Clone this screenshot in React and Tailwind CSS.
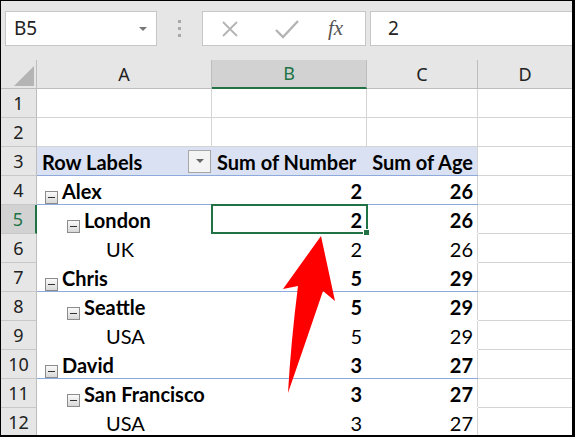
import React from "react";

const DATA_FONT = { fontFamily: "Lato, 'Liberation Sans', sans-serif" };
const UI_FONT = { fontFamily: "'Noto Sans', 'Open Sans', sans-serif" };

function Collapse() {
  return (
    <span className="inline-flex items-center justify-center w-[13px] h-[13px] border border-[#8c8c8c] bg-gradient-to-b from-[#fafafa] to-[#d8d8d8] mr-[4px] shrink-0">
      <span className="block w-[7px] h-[1px] bg-[#333]" />
    </span>
  );
}

const rows = [
  { n: 5, level: 1, label: "London", b: "2", c: "26", bold: true, sel: true },
  { n: 6, level: 2, label: "UK", b: "2", c: "26", bold: false },
  { n: 7, level: 0, label: "Chris", b: "5", c: "29", bold: true, line: true },
  { n: 8, level: 1, label: "Seattle", b: "5", c: "29", bold: true },
  { n: 9, level: 2, label: "USA", b: "5", c: "29", bold: false },
  { n: 10, level: 0, label: "David", b: "3", c: "27", bold: true, line: true },
  { n: 11, level: 1, label: "San Francisco", b: "3", c: "27", bold: true },
  { n: 12, level: 2, label: "USA", b: "3", c: "27", bold: false },
];

function RowHeader({ n, sel }) {
  return (
    <div
      className={
        "w-[36px] h-full flex items-center justify-center text-[18px] border-b border-[#c8c8c8] " +
        (sel
          ? "bg-[#d2d2d2] text-[#217346] border-r-2 border-r-[#217346]"
          : "bg-[#e6e6e6] text-[#222] border-r border-r-[#bdbdbd]")
      }
      style={UI_FONT}
    >
      {n}
    </div>
  );
}

function PivotRow({ r }) {
  const indent =
    r.level === 0 ? "pl-[8px]" : r.level === 1 ? "pl-[30px]" : "pl-[69px]";
  const weight = r.bold ? "font-bold" : "font-normal";
  const lineCls = r.line ? "border-b border-[#8ea9db]" : "border-b border-transparent";
  return (
    <div className="flex h-[29px]">
      <RowHeader n={r.n} sel={r.sel} />
      <div className={"flex " + lineCls} style={DATA_FONT}>
        <div className={"w-[175px] flex items-end pb-[3px] text-[20px] text-black " + indent + " " + weight}>
          {r.level < 2 && (
            <span className="self-center mt-[3px]">
              <Collapse />
            </span>
          )}
          <span className="leading-none">{r.label}</span>
        </div>
        <div className={"relative w-[155px] flex items-end justify-end pr-[5px] pb-[3px] text-[20px] text-black leading-none " + weight}>
          {r.b}
          {r.sel && (
            <div className="absolute -top-[1px] -left-[1px] -right-[1px] -bottom-[1px] border-2 border-[#217346]">
              <div className="absolute -right-[4px] -bottom-[4px] w-[7px] h-[7px] bg-[#217346] border border-white" />
            </div>
          )}
        </div>
        <div className={"w-[111px] flex items-end justify-end pr-[4px] pb-[3px] text-[20px] text-black leading-none border-r border-r-[#d4d4d4] " + weight}>
          {r.c}
        </div>
      </div>
      <div className="w-[94px] border-b border-[#d4d4d4] bg-white" />
    </div>
  );
}

export default function App() {
  return (
    <div className="relative w-[575px] h-[437px] overflow-hidden bg-[#e6e6e6] border-t border-l border-r-[3px] border-b-2 border-black">
      {/* Toolbar */}
      <div className="h-[59px] flex items-start pt-[10px] pl-[4px]" style={UI_FONT}>
        <div className="w-[152px] h-[35px] bg-white border border-[#c6c6c6] flex items-center justify-between pl-[8px] pr-[9px]">
          <span className="text-[19px] text-[#222]">B5</span>
          <span className="w-0 h-0 border-l-[4px] border-r-[4px] border-t-[4px] border-l-transparent border-r-transparent border-t-[#777]" />
        </div>
        <div className="w-[45px] h-[35px] flex flex-col items-center justify-center gap-[4px]">
          <span className="w-[3px] h-[3px] bg-[#a8a8a8]" />
          <span className="w-[3px] h-[3px] bg-[#a8a8a8]" />
          <span className="w-[3px] h-[3px] bg-[#a8a8a8]" />
        </div>
        <div className="w-[164px] h-[35px] bg-white border border-[#c6c6c6] flex items-center">
          <svg width="20" height="20" viewBox="0 0 20 20" className="ml-[17px]">
            <path d="M3 3 L17 17 M17 3 L3 17" stroke="#b4b4b4" strokeWidth="1.8" fill="none" />
          </svg>
          <svg width="26" height="22" viewBox="0 0 26 22" className="ml-[34px]">
            <path d="M2 12 L9 19 L24 3" stroke="#b4b4b4" strokeWidth="2.4" fill="none" />
          </svg>
          <span
            className="ml-[28px] text-[21px] italic text-[#555]"
            style={{ fontFamily: "'Liberation Serif', serif" }}
          >
            fx
          </span>
        </div>
        <div className="ml-[4px] flex-1 h-[35px] bg-white border border-[#c6c6c6] border-r-0 flex items-center pl-[17px]">
          <span className="text-[19px] text-[#222]">2</span>
        </div>
      </div>

      {/* Column headers */}
      <div className="flex h-[29px] text-[18px]" style={UI_FONT}>
        <div className="w-[36px] h-full bg-[#e6e6e6] border-r border-b border-[#bdbdbd] flex items-end justify-end p-[2px]">
          <svg width="20" height="20" viewBox="0 0 20 20">
            <path d="M20 0 L20 20 L0 20 Z" fill="#b4b4b4" />
          </svg>
        </div>
        <div className="w-[175px] h-full bg-[#e6e6e6] border-r border-b border-[#bdbdbd] flex items-center justify-center text-[#222]">
          A
        </div>
        <div className="w-[155px] h-full bg-[#d2d2d2] border-r border-r-[#bdbdbd] border-b-2 border-b-[#217346] flex items-center justify-center text-[#217346]">
          B
        </div>
        <div className="w-[111px] h-full bg-[#e6e6e6] border-r border-b border-[#bdbdbd] flex items-center justify-center text-[#222]">
          C
        </div>
        <div className="w-[94px] h-full bg-[#e6e6e6] border-b border-[#bdbdbd] flex items-center justify-center text-[#222]">
          D
        </div>
      </div>

      {/* Rows 1 and 2 */}
      {[1, 2].map((n) => (
        <div key={n} className="flex h-[29px]">
          <RowHeader n={n} />
          <div className="w-[175px] bg-white border-r border-b border-[#d4d4d4]" />
          <div className="w-[155px] bg-white border-r border-b border-[#d4d4d4]" />
          <div className="w-[111px] bg-white border-r border-b border-[#d4d4d4]" />
          <div className="w-[94px] bg-white border-b border-[#d4d4d4]" />
        </div>
      ))}

      {/* Row 3: pivot header */}
      <div className="flex h-[29px]">
        <RowHeader n={3} />
        <div className="flex bg-[#d9e1f2] border-b border-[#8ea9db] text-[20px] font-bold text-black" style={DATA_FONT}>
          <div className="w-[175px] flex items-center justify-between pl-[5px] pr-[1px]">
            <span className="self-end pb-[3px] leading-none">Row Labels</span>
            <span className="w-[23px] h-[23px] bg-[#f4f4f4] border border-[#a6a6a6] flex items-center justify-center">
              <span className="w-0 h-0 border-l-[4px] border-r-[4px] border-t-[4px] border-l-transparent border-r-transparent border-t-[#666]" />
            </span>
          </div>
          <div className="w-[155px] flex items-end pb-[3px] pl-[5px] leading-none whitespace-nowrap">
            Sum of Number
          </div>
          <div className="w-[111px] flex items-end justify-end pb-[3px] pr-[4px] leading-none whitespace-nowrap border-r border-r-[#d4d4d4]">
            Sum of Age
          </div>
        </div>
        <div className="w-[94px] bg-white border-b border-[#d4d4d4]" />
      </div>

      {/* Pivot body */}
      <div className="bg-white">
        <PivotRow r={{ n: 4, level: 0, label: "Alex", b: "2", c: "26", bold: true, line: true }} />
        {rows.map((r) => (
          <PivotRow key={r.n} r={r} />
        ))}
      </div>

      {/* Red arrow */}
      <svg
        className="absolute left-0 top-0 pointer-events-none"
        width="575"
        height="437"
        viewBox="0 0 575 437"
      >
        <path
          d="M320 235 L334 300 L322 290 Q305 340 287 392 Q290 340 297 285 L282 288 Z"
          fill="#ff0000"
        />
      </svg>
    </div>
  );
}
